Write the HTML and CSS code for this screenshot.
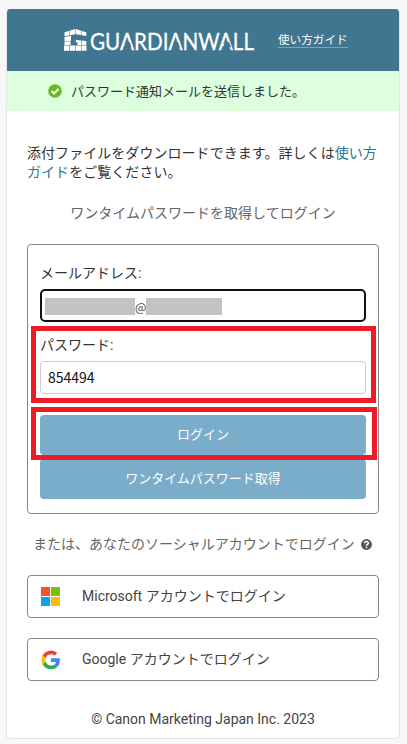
FILE: index.html
```html
<!DOCTYPE html>
<html lang="ja">
<head>
<meta charset="utf-8">
<title>GUARDIANWALL</title>
<link rel="stylesheet" href="styles.css">
</head>
<body>
<main class="card">
  <header class="header">
    <svg class="logo" width="196" height="28" viewBox="0 0 196 28">
      <g fill="#fff">
        <path d="M1.500 3.200L6 1.900v4.400l-4.500 1zM6.500 1.700L12.300 0v5.200l-5.800 1zM12.800 0l5.400 1.700v4.400l-5.400-.9zM18.700 2l4.600 1.300v3.800l-4.600-.9z"/>
        <path d="M1.500 7.900L8 6.700v5l-6.500.7zM1.500 12.900L7.500 12.300v3.700h-6zM1 16.500h5.500v5.200H1zM7 16.500h5.500v5.200H7zM13 16.500h5.400v5.200H13zM18.900 16.500h4.600v5.200h-4.600zM12.800 10.800l5.400.6v4.600h-3.700v-2.800h-1.700zM18.700 11.500l4.600.6V16h-4.600z"/>
      </g>
      <text class="logo-text" x="27" y="21.300" textLength="164" lengthAdjust="spacingAndGlyphs">GUARDIANWALL</text>
      <path class="logo-gap" d="M62.500 13.200h4.200l1.900 5h-8zM110.900 13.200h4.200l1.900 5h-8zM162 13.200h4.200l1.900 5h-8z"/>
    </svg>
    <a class="guide">使い方ガイド</a>
  </header>
  <div class="notice">
    <svg width="14" height="14" viewBox="0 0 14 14"><circle cx="7" cy="7" r="6.800" fill="#67b928"/><path d="M3.500 7l2.500 2.500 4.600-4.600" fill="none" stroke="#fff" stroke-width="2"/></svg>
    <span>パスワード通知メールを送信しました。</span>
  </div>
  <div class="content">
    <p class="intro">添付ファイルをダウンロードできます。詳しくは<a>使い方ガイド</a>をご覧ください。</p>
    <h1 class="title">ワンタイムパスワードを取得してログイン</h1>
    <section class="form">
      <div class="label">メールアドレス:</div>
      <div class="field focused"><i class="mask mask-user"></i><span class="at">@</span><i class="mask mask-host"></i></div>
      <div class="label second">パスワード:</div>
      <div class="field">854494</div>
      <div class="button login">ログイン</div>
      <div class="button">ワンタイムパスワード取得</div>
      <i class="mark mark-password"></i>
      <i class="mark mark-login"></i>
    </section>
    <div class="alternative"><span>または、あなたのソーシャルアカウントでログイン</span>
      <svg width="11" height="11" viewBox="0 0 11 11"><circle cx="5.500" cy="5.500" r="5.400" fill="#555"/><path d="M3.500 4.300C3.700 2 7.500 2 7.400 4.300 7.300 5.500 5.600 5.400 5.500 6.700M5.500 7.500v1.500" fill="none" stroke="#fff" stroke-width="1.500"/></svg>
    </div>
    <div class="social">
      <svg width="20" height="20" viewBox="0 0 20 20"><path fill="#f35325" d="M0 0h9v9H0z"/><path fill="#81bc06" d="M10 0h9v9h-9z"/><path fill="#05a6f0" d="M0 10h9v9H0z"/><path fill="#ffba08" d="M10 10h9v9h-9z"/></svg>
      <span>Microsoft アカウントでログイン</span>
    </div>
    <div class="social">
      <svg width="20" height="20" viewBox="-1.300 -1.300 51 51"><path fill="#EA4335" d="M24 9.500c3.540 0 6.710 1.220 9.210 3.600l6.850-6.850C35.900 2.380 30.470 0 24 0 14.620 0 6.510 5.380 2.560 13.220l7.980 6.190C12.430 13.720 17.740 9.500 24 9.500z"/><path fill="#4285F4" d="M46.980 24.550c0-1.570-.15-3.090-.38-4.550H24v9.020h12.940c-.58 2.960-2.260 5.480-4.780 7.180l7.730 6c4.510-4.180 7.090-10.360 7.090-17.650z"/><path fill="#FBBC05" d="M10.530 28.590A14.500 14.500 0 0 1 10.540 19.410l-7.980-6.190A24 24 0 0 0 2.560 34.780z"/><path fill="#34A853" d="M24 48c6.480 0 11.930-2.130 15.890-5.810l-7.730-6c-2.150 1.450-4.920 2.300-8.160 2.300-6.260 0-11.570-4.220-13.470-9.910l-7.970 6.200C6.510 42.620 14.620 48 24 48z"/></svg>
      <span>Google アカウントでログイン</span>
    </div>
    <footer class="footer">© Canon Marketing Japan Inc. 2023</footer>
  </div>
</main>
</body>
</html>
```
FILE: styles.css
```css
* { box-sizing: border-box; }
body {
  margin: 0;
  padding: 9px 7px 0 6px;
  background: #f7f7f7;
  color: #333;
  font: 14px/19px Roboto, "Noto Sans CJK JP", sans-serif;
}
svg { display: block; flex: none; }
a { color: #2f7396; }
.card {
  height: 730px;
  background: #fff;
  border: 1px solid #e4e4e4;
  border-top: 0;
  border-radius: 4px;
  overflow: hidden;
}
.header {
  display: flex;
  height: 62px;
  padding: 20px 0 0 56px;
  background: #417690;
}
.logo { overflow: visible; }
.logo-text {
  fill: #fff;
  stroke: #fff;
  stroke-width: 0.3px;
  font: 22.6px Lato, sans-serif;
}
.logo-gap { fill: #417690; }
.guide {
  height: 19px;
  margin: 0 0 0 19px;
  border-bottom: 1px solid #7ba3b6;
  color: #fff;
  font-size: 11.6px;
  line-height: 23px;
  white-space: nowrap;
}
.notice {
  display: flex;
  align-items: center;
  gap: 9px;
  height: 40px;
  padding-left: 41px;
  background: #dfd;
  font-size: 13px;
}
.content { padding: 33px 20px 0; }
.intro {
  margin: 0 -2px 0 0;
  letter-spacing: 0.05px;
}
.title {
  margin: 22px 0 21px;
  color: #666;
  font-size: 14px;
  font-weight: 400;
  text-align: center;
}
.form {
  position: relative;
  height: 270px;
  padding: 19px 12px 0;
  border: 1px solid #888;
  border-radius: 4px;
}
.label { margin-bottom: 6px; }
.label.second { margin-top: 14px; }
.field {
  display: flex;
  align-items: center;
  height: 33px;
  padding: 0 7px;
  border: 1px solid #ccc;
  border-radius: 4px;
  color: #111;
  font-family: "Noto Sans CJK JP", sans-serif;
}
.focused {
  padding: 1px 3px 0;
  border: 2px solid #111;
  border-radius: 5px;
  font-size: 12px;
}
.at {
  color: #444;
  line-height: 17px;
}
.mask { height: 17px; background: #c3c3c3; }
.mask-user { width: 90px; }
.mask-host { width: 76px; }
.button {
  height: 40px;
  border-radius: 4px;
  background: #79adc9;
  color: #fff;
  font-size: 13px;
  line-height: 40px;
  text-align: center;
}
.login { margin: 21px 0 4px; }
.mark {
  position: absolute;
  left: 3px;
  border: 5px solid #ed1c24;
}
.mark-password { top: 81px; width: 345px; height: 77px; }
.mark-login { top: 162px; width: 346px; height: 53px; }
.alternative {
  display: flex;
  align-items: center;
  gap: 6px;
  margin: 21px 0;
  padding-left: 6px;
  color: #666;
  white-space: nowrap;
}
.social {
  display: flex;
  align-items: center;
  gap: 21px;
  height: 43px;
  margin-bottom: 20px;
  padding-left: 13px;
  border: 1px solid #888;
  border-radius: 4px;
  color: #444;
}
.footer {
  margin-top: 29px;
  color: #444;
  text-align: center;
}
```
